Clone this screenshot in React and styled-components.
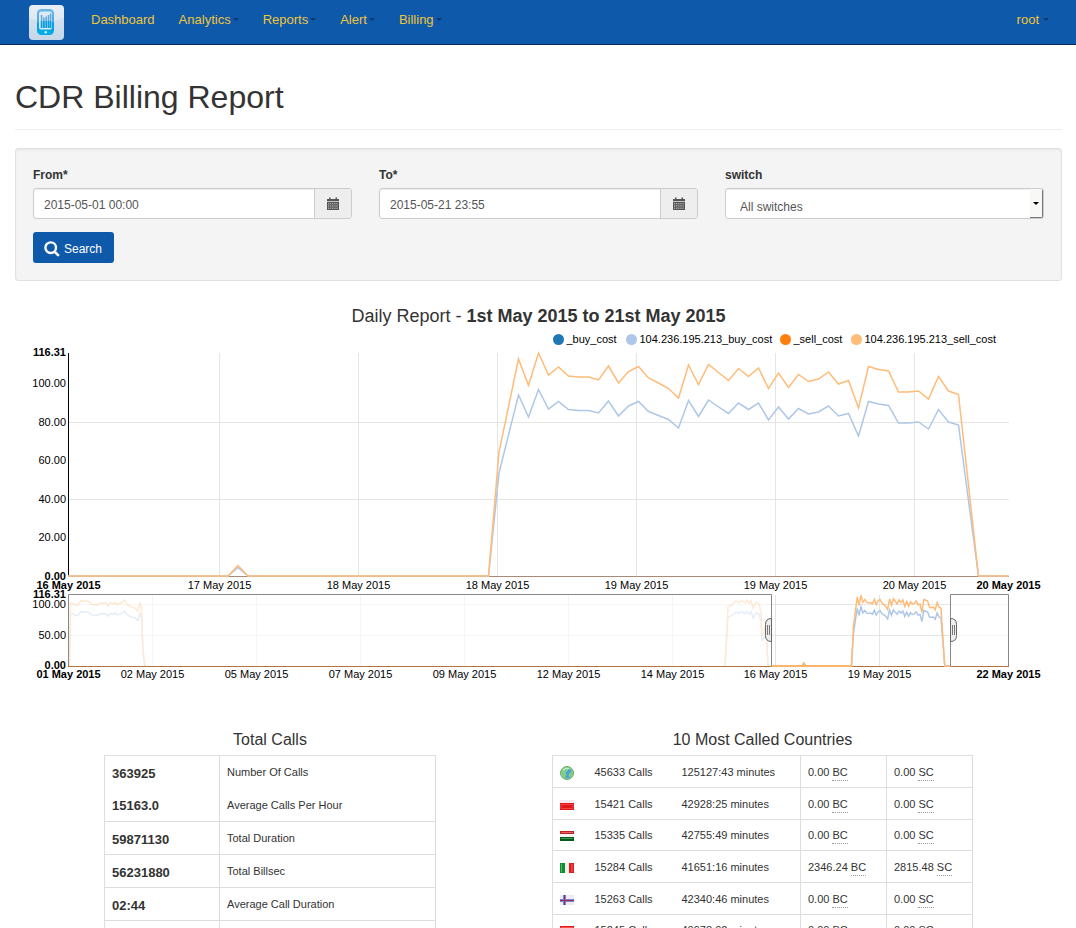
import React from "react";
import styled, { createGlobalStyle } from "styled-components";

const Global = createGlobalStyle`
  * { box-sizing: border-box; }
  body {
    margin: 0;
    background: #fff;
    color: #333;
    font-family: "Liberation Sans", Helvetica, Arial, sans-serif;
    font-size: 13px;
  }
`;

const Page = styled.div`
  height: 100vh;
  overflow: hidden;
`;

const Navbar = styled.nav`
  display: flex;
  align-items: center;
  height: 45px;
  padding: 0 27px 0 29px;
  background: #0e59aa;
  border-bottom: 1px solid #06294f;
`;

const Brand = styled.a`
  display: flex;
  margin-right: 27px;
`;

const NavList = styled.div`
  display: flex;
  flex: 1;
  gap: 24px;
  padding-bottom: 5px;
`;

const NavLink = styled.a`
  display: flex;
  align-items: center;
  gap: ${(p) => p.$gap || 2}px;
  color: #f0c537;
  font-size: 13px;
  line-height: 20px;
  text-decoration: none;
  margin-left: ${(p) => (p.$end ? "auto" : "0")};
`;

const Caret = styled.span`
  width: 6px;
  border: 3px solid transparent;
  border-top-color: #0a3a70;
  border-bottom: 0;
`;

const Main = styled.main`
  padding: 0 14px 0 15px;
`;

const Title = styled.h1`
  margin: 0 0 18px;
  padding: 32px 0 12px;
  border-bottom: 1px solid #eee;
  font-size: 32px;
  font-weight: 400;
  line-height: 40px;
`;

const SearchForm = styled.form`
  padding: 17px;
  background: #f4f4f4;
  border: 1px solid #e1e1e1;
  border-radius: 3px;
  box-shadow: inset 0 1px 2px rgba(0, 0, 0, 0.06);
`;

const Fields = styled.div`
  display: grid;
  grid-template-columns: repeat(3, 1fr);
  gap: 27px;
`;

const Field = styled.div`
  display: flex;
  flex-direction: column;
`;

const Label = styled.label`
  margin-bottom: 4px;
  font-size: 12px;
  font-weight: 700;
  line-height: 18px;
`;

const InputGroup = styled.div`
  display: flex;
  height: 31px;
  border: 1px solid #ccc;
  border-radius: 3px;
  background: #fff;
  box-shadow: inset 0 1px 1px rgba(0, 0, 0, 0.07);
  position: relative;
  overflow: hidden;
`;

const Input = styled.input`
  flex: 1;
  min-width: 0;
  padding: 2px 10px 0;
  border: 0;
  background: transparent;
  color: #555;
  font: 12px "Liberation Sans", Arial, sans-serif;
`;

const CalendarButton = styled.button`
  display: flex;
  align-items: center;
  justify-content: center;
  width: 37px;
  padding: 0 0 1px;
  border: 0;
  border-left: 1px solid #ccc;
  background: #eee;
`;

const Select = styled.select`
  flex: 1;
  appearance: none;
  padding: 6px 14px 0;
  border: 0;
  background: transparent;
  color: #555;
  font: 12px "Liberation Sans", Arial, sans-serif;
`;

const SelectArrow = styled.span`
  position: absolute;
  top: 0;
  right: 0;
  bottom: 0;
  display: flex;
  align-items: center;
  justify-content: center;
  width: 13px;
  border-right: 1px solid #777;
  border-bottom: 1px solid #777;
  background: #f8f8f6;
  pointer-events: none;

  &::after {
    content: "";
    border: 3px solid transparent;
    border-top-color: #000;
    border-bottom: 0;
  }
`;

const SearchButton = styled.button`
  display: flex;
  align-items: center;
  gap: 4px;
  height: 31px;
  margin-top: 13px;
  padding: 2px 12px 0 11px;
  border: 0;
  border-radius: 3px;
  background: #0e59aa;
  color: #fff;
  font: 12px "Liberation Sans", Arial, sans-serif;
`;

const ChartTitle = styled.h2`
  margin: 24px 0 3px;
  font-size: 18px;
  font-weight: 400;
  line-height: 22px;
  text-align: center;
`;

const ChartSvg = styled.svg`
  display: block;
  width: 100%;
  height: auto;

  text {
    font-family: "Liberation Sans", Arial, sans-serif;
    font-size: 11px;
    fill: #000;
  }
`;

const AxisText = styled.text`
  font-weight: ${(p) => (p.$bold ? 700 : 400)};
`;

const Reports = styled.section`
  display: grid;
  grid-template-columns: 1fr 1fr;
  gap: 27px;
  margin-top: 40px;
`;

const Report = styled.div`
  width: ${(p) => p.$width}px;
  max-width: 100%;
  justify-self: ${(p) => p.$align};
`;

const ReportTitle = styled.h3`
  margin: 0 0 5px;
  font-size: 16px;
  font-weight: 400;
  line-height: 20px;
  text-align: center;
`;

const Table = styled.table`
  width: 100%;
  border-collapse: collapse;
  border: 1px solid #ddd;
  table-layout: fixed;
  font-size: 11px;
`;

const TotalRow = styled.tr`
  height: 33px;
  border-top: ${(p) => (p.$joined ? "0" : "1px solid #ddd")};
`;

const TotalValue = styled.th`
  width: 115px;
  padding: 3px 7px 0;
  border-right: 1px solid #ddd;
  font-size: 13px;
  font-weight: 700;
  line-height: 16px;
  text-align: left;
`;

const Cell = styled.td`
  width: ${(p) => (p.$width ? p.$width + "px" : "auto")};
  padding: 0 7px;
  border-left: ${(p) => (p.$ruled ? "1px solid #ddd" : "0")};
  line-height: 16px;
  white-space: nowrap;
`;

const CountryRow = styled.tr`
  height: 32px;
  border-top: 1px solid #ddd;

  &:nth-child(3n) { height: 31px; }
`;

const FlagCell = styled(Cell)`
  padding-top: 2px;

  svg { display: block; }
`;

const Unit = styled.abbr`
  padding-bottom: 2px;
  border-bottom: 1px dotted #999;
  text-decoration: none;
`;

function Logo() {
  return (
    <svg width="35" height="35" viewBox="0 0 35 35" aria-label="Home">
      <defs>
        <linearGradient id="tile" x1="0" y1="0" x2="0" y2="1">
          <stop offset="0" stopColor="#dfe9f2" />
          <stop offset="1" stopColor="#c3d6e8" />
        </linearGradient>
        <linearGradient id="phone" x1="0" y1="0" x2="0" y2="1">
          <stop offset="0" stopColor="#6cb6e6" />
          <stop offset="0.5" stopColor="#4aa9e2" />
          <stop offset="0.55" stopColor="#0a9de0" />
          <stop offset="1" stopColor="#00aeea" />
        </linearGradient>
      </defs>
      <rect width="35" height="35" rx="4" fill="url(#tile)" />
      <path d="M0 13V4a4 4 0 0 1 4-4h27a4 4 0 0 1 4 4v9Q17 20 0 13Z" fill="#fff" opacity="0.25" />
      <rect x="8" y="4" width="17" height="26" rx="4.500" fill="url(#phone)" />
      <rect x="10" y="6.500" width="13" height="18" rx="2" fill="#dceaf5" />
      <path d="M12.600 16V10M14.900 16V12.500M17.200 16V11.500M19.500 16V10M21.600 16V8.500" stroke="#5aa8de" strokeWidth="1.500" />
      <path d="M12.600 23V16M14.900 23V16M17.200 23V16M19.500 23V16M21.600 23V16" stroke="#0a9de0" strokeWidth="1.800" />
      <circle cx="16.700" cy="27.200" r="1.200" fill="#e6f4fb" />
    </svg>
  );
}

function CalendarIcon() {
  return (
    <svg width="12" height="13" viewBox="0 0 12 13" fill="#555">
      <path d="M0 2h2V0.500h1.500V2h5V0.500H10V2h2v2.300H0Z" />
      <path d="M0 5h12v8H0Z" />
      <path d="M1 6.800h10M1 9h10M1 11.200h10" stroke="#e4e4e4" strokeWidth="0.900" strokeDasharray="1.200 0.900" />
    </svg>
  );
}

function SearchIcon() {
  return (
    <svg width="16" height="16" viewBox="0 0 16 16" fill="none" stroke="#fff">
      <circle cx="6.700" cy="6.700" r="5.300" strokeWidth="2.400" />
      <path d="m10.800 10.800 3.300 3.300" strokeWidth="2.600" strokeLinecap="round" />
    </svg>
  );
}

/* Traces in plot units: x in 68–1008, y in 353 (peak) – 576 (zero). */
const SELL = [
  [68, 576], [228, 576], [238, 565.5], [248, 576], [488.5, 576], [499, 452], [518.5, 359],
  [528.5, 385.5], [538.5, 353], [548.5, 375], [558.5, 367], [568.5, 376], [578.5, 377],
  [588.5, 377], [598.5, 380], [608.5, 366], [618.5, 383], [628.5, 371.5], [638.5, 366.5],
  [648.5, 378], [658.5, 383], [668.5, 388.5], [678.5, 398], [688.5, 365], [698.5, 384.5],
  [708.5, 364.5], [718.5, 372.5], [728.5, 380.5], [738.5, 368.5], [748.5, 376.5], [758.5, 368],
  [768.5, 388.5], [778.5, 373], [788.5, 387.5], [798.5, 374.5], [808.5, 381.5], [818.5, 379],
  [828.5, 372], [838.5, 384], [848.5, 380.5], [858.5, 408], [868.5, 366.5], [878.5, 369.5],
  [888.5, 371], [898.5, 392], [908.5, 392], [918.5, 391], [928.5, 399], [938.5, 376.5],
  [948.5, 391], [958.5, 394.5], [978.5, 576], [1008.5, 576],
];
const BUY = [
  [68, 576], [228, 576], [238, 567.5], [248, 576], [488.5, 576], [499, 473], [518.5, 395],
  [528.5, 417], [538.5, 389.5], [548.5, 409], [558.5, 401.5], [568.5, 409.5], [578.5, 410.5],
  [588.5, 410.5], [598.5, 413], [608.5, 401], [618.5, 416], [628.5, 406], [638.5, 401.5],
  [648.5, 411.5], [658.5, 415.5], [668.5, 419.5], [678.5, 428], [688.5, 400.5], [698.5, 416.5],
  [708.5, 400], [718.5, 407], [728.5, 413.5], [738.5, 403], [748.5, 409.5], [758.5, 403],
  [768.5, 420], [778.5, 407], [788.5, 419], [798.5, 408.5], [808.5, 414], [818.5, 412],
  [828.5, 406], [838.5, 416], [848.5, 413.5], [858.5, 436], [868.5, 401.5], [878.5, 404],
  [888.5, 405.5], [898.5, 423], [908.5, 423], [918.5, 422], [928.5, 429], [938.5, 409.5],
  [948.5, 422], [958.5, 425], [978.5, 576], [1008.5, 576],
];

/* Overview traces outside the selected range; y is the sell line. */
const EARLY = [
  [69.5, 666], [70.5, 603], [74, 604], [76, 605.5], [78, 605], [81, 600.5], [84, 601], [88, 601],
  [92, 604.5], [98, 605], [100, 603], [106, 603], [108, 606], [110, 602.5], [113, 604],
  [115, 602], [117, 604.5], [122, 602.5], [124.5, 600], [127, 604.5], [131, 607], [135, 608],
  [138, 611], [140, 603], [141.5, 607], [143, 650], [145, 666],
];
const MIDDLE = [
  [725, 666], [728, 607], [732, 605], [736, 601], [739, 602.5], [742, 600.5], [745, 603],
  [747, 600], [749, 603.5], [751, 600.5], [753, 608], [756, 602], [759, 604], [761, 612],
  [762, 635], [764, 633], [766, 621], [768, 666],
];

const toPoints = (pts) => pts.map((p) => p.join(",")).join(" ");
const toOverview = (pts) =>
  toPoints(pts.map(([x, y]) => [771.5 + (x - 68.5) * 0.1904, 666 - (576 - y) * 0.318]));
const toBuy = (pts) => toPoints(pts.map(([x, y]) => [x, y === 666 ? y : 666 - (666 - y) * 0.83]));

const LEGEND = [
  [558.5, "#1f77b4", "_buy_cost"],
  [631.5, "#aec7e8", "104.236.195.213_buy_cost"],
  [785.5, "#ff7f0e", "_sell_cost"],
  [856.5, "#ffbb78", "104.236.195.213_sell_cost"],
];
const MAIN_X = [
  [219.5, "17 May 2015"], [358.5, "18 May 2015"], [497.5, "18 May 2015"], [636.5, "19 May 2015"],
  [775.5, "19 May 2015"], [914.5, "20 May 2015"],
];
const MAIN_Y = [
  [356, "116.31", true], [387, "100.00"], [426, "80.00"], [464, "60.00"], [503, "40.00"],
  [541, "20.00"], [580, "0.00", true], [598, "116.31", true], [608, "100.00"], [639, "50.00"],
  [669, "0.00", true],
];
const MINI_X = [
  [152.5, "02 May 2015"], [256.5, "05 May 2015"], [360.5, "07 May 2015"], [464.5, "09 May 2015"],
  [568.5, "12 May 2015"], [672.5, "14 May 2015"], [775.5, "16 May 2015"], [879.5, "19 May 2015"],
];
const ENDS = [
  [68.5, 589, "16 May 2015"], [1008.5, 589, "20 May 2015"],
  [68.5, 678, "01 May 2015"], [1008.5, 678, "22 May 2015"],
];

function BrushHandle({ x, side }) {
  const d = side;
  return (
    <g>
      <path
        d={`M${x} 618.5q${d * 6} 0 ${d * 6} 6v11q0 6 ${-d * 6} 6Z`}
        fill="#eee"
        stroke="#666"
      />
      <path d={`M${x + d * 2} 625v10M${x + d * 4} 625v10`} stroke="#777" />
    </g>
  );
}

function Chart() {
  return (
    <ChartSvg viewBox="15 330 1047 360" role="img" aria-label="Daily report costs">
      {LEGEND.map(([x, color, name]) => (
        <g key={name}>
          <circle cx={x} cy="339.500" r="5.500" fill={color} />
          <text x={x + 8} y="343">{name}</text>
        </g>
      ))}
      <g stroke="#e5e5e5">
        {MAIN_X.map(([x]) => <path key={x} d={`M${x} 353V576`} />)}
        <path d="M69 422.500H1009M69 499.500H1009" />
      </g>
      <path d="M68.500 353V577" stroke="#000" />
      <path d="M68 576.500H1009" stroke="#a88a78" />
      <g fill="none" strokeWidth="1.500">
        <polyline points={toPoints(BUY)} stroke="#aec7e8" />
        <polyline points={toPoints(SELL)} stroke="#ffbb78" />
      </g>

      <g stroke="#e5e5e5">
        <path d="M69 604.500H1009M69 635.500H1009" opacity="0.350" />
        <path d="M772 604.500H950M772 635.500H950" />
        {MINI_X.map(([x]) => (
          <path key={x} d={`M${x} 595V666`} opacity={x > 772 ? 1 : 0.35} />
        ))}
      </g>
      <path d="M68 666.500H1009" stroke="#b5723a" />
      <g fill="none" strokeWidth="1.500">
        <g opacity="0.300">
          <polyline points={toBuy(EARLY)} stroke="#aec7e8" />
          <polyline points={toBuy(MIDDLE)} stroke="#aec7e8" />
          <polyline points={toPoints(EARLY)} stroke="#ffbb78" />
          <polyline points={toPoints(MIDDLE)} stroke="#ffbb78" />
        </g>
        <polyline points={toOverview(BUY)} stroke="#aec7e8" />
        <polyline points={toOverview(SELL)} stroke="#ffbb78" />
      </g>
      <path d="M772 666H852" stroke="#ffb46c" strokeWidth="2" />
      <g fill="none" stroke="#888">
        <path d="M68.500 666V594.500H771.500V666" />
        <path d="M950.500 666V594.500H1008.500V666" />
      </g>
      <BrushHandle x={771.5} side={-1} />
      <BrushHandle x={950.5} side={1} />

      <g textAnchor="end">
        {MAIN_Y.map(([y, label, bold]) => (
          <AxisText key={y} x="66" y={y} $bold={bold}>{label}</AxisText>
        ))}
      </g>
      <g textAnchor="middle">
        {MAIN_X.map(([x, label]) => <AxisText key={x} x={x} y="589">{label}</AxisText>)}
        {MINI_X.map(([x, label]) => <AxisText key={x} x={x} y="678">{label}</AxisText>)}
        {ENDS.map(([x, y, label]) => (
          <AxisText key={label} x={x} y={y} $bold>{label}</AxisText>
        ))}
      </g>
    </ChartSvg>
  );
}

function Flag({ name }) {
  if (name === "world") {
    return (
      <svg width="14" height="14" viewBox="0 0 14 14">
        <circle cx="7" cy="7" r="6.500" fill="#8fd093" stroke="#62ab62" />
        <circle cx="7.500" cy="7.500" r="4.800" fill="#4f9fd6" />
        <path d="M2 5Q4 1 9 2L8 4.500 5.500 6.500 6.500 9 5 12Q2 10 2 5ZM9.500 7l3-2v4l-2.500 3-1.500-2.500Z" fill="#7fd08a" />
        <path d="M3 4Q6 1.500 9 2.500" stroke="#d0f0d0" fill="none" />
      </svg>
    );
  }
  const art = {
    poland: (
      <>
        <path fill="#f5e9eb" d="M0 0h14v4H0Z" />
        <path fill="#e01818" d="M0 3h14v7H0Z" />
        <path d="M1 4.500h12v4H1Z" stroke="#f45050" strokeWidth="0.800" fill="none" />
      </>
    ),
    hungary: (
      <>
        <path fill="#c22020" d="M0 0h14v3H0Z" />
        <path d="M1 1.500h12" stroke="#e86060" />
        <path fill="#f4f4f4" d="M0 3h14v4H0Z" />
        <path fill="#0a5a1c" d="M0 6h14v4H0Z" />
        <path d="M1 7.500h12" stroke="#3c9a4c" />
      </>
    ),
    italy: (
      <>
        <path fill="#f0f0f0" d="M0 0h14v10H0Z" />
        <path fill="#128a30" d="M0 0h5v10H0Z" />
        <path fill="#e01c1c" d="M9 0h5v10H9Z" />
        <path d="M1.500 1v8" stroke="#4cb864" />
        <path d="M12 1v8" stroke="#f46060" />
      </>
    ),
    faroe: (
      <>
        <path fill="#ececf2" d="M0 0h14v10H0Z" />
        <path d="M4.500 0v10M0 5.500h14" stroke="#7a86d0" strokeWidth="3" />
        <path d="M4.500 0v10M0 5.500h14" stroke="#a02858" strokeWidth="1" />
      </>
    ),
    red: (
      <>
        <path fill="#e01818" d="M0 0h14v10H0Z" />
        <path d="M1 1.500h12v7H1Z" fill="none" stroke="#f66" strokeWidth="0.800" />
      </>
    ),
  };
  return <svg width="14" height="10" viewBox="0 0 14 10">{art[name]}</svg>;
}

const TOTALS = [
  ["363925", "Number Of Calls"],
  ["15163.0", "Average Calls Per Hour"],
  ["59871130", "Total Duration"],
  ["56231880", "Total Billsec"],
  ["02:44", "Average Call Duration"],
  ["", ""],
];
const COUNTRIES = [
  ["world", "45633", "125127:43", "0.00", "0.00"],
  ["poland", "15421", "42928:25", "0.00", "0.00"],
  ["hungary", "15335", "42755:49", "0.00", "0.00"],
  ["italy", "15284", "41651:16", "2346.24", "2815.48"],
  ["faroe", "15263", "42340:46", "0.00", "0.00"],
  ["red", "15245", "40978:02", "0.00", "0.00"],
];
const MENUS = ["Analytics", "Reports", "Alert", "Billing"];

export default function App() {
  return (
    <Page>
      <Global />
      <Navbar>
        <Brand href="#"><Logo /></Brand>
        <NavList>
          <NavLink href="#">Dashboard</NavLink>
          {MENUS.map((m) => <NavLink key={m} href="#">{m}<Caret /></NavLink>)}
          <NavLink href="#" $end $gap={4}>root<Caret /></NavLink>
        </NavList>
      </Navbar>
      <Main>
        <Title>CDR Billing Report</Title>
        <SearchForm onSubmit={(e) => e.preventDefault()}>
          <Fields>
            <Field>
              <Label htmlFor="from">From*</Label>
              <InputGroup>
                <Input id="from" defaultValue="2015-05-01 00:00" />
                <CalendarButton type="button" aria-label="Pick start date"><CalendarIcon /></CalendarButton>
              </InputGroup>
            </Field>
            <Field>
              <Label htmlFor="to">To*</Label>
              <InputGroup>
                <Input id="to" defaultValue="2015-05-21 23:55" />
                <CalendarButton type="button" aria-label="Pick end date"><CalendarIcon /></CalendarButton>
              </InputGroup>
            </Field>
            <Field>
              <Label htmlFor="switch">switch</Label>
              <InputGroup>
                <Select id="switch"><option>All switches</option></Select>
                <SelectArrow />
              </InputGroup>
            </Field>
          </Fields>
          <SearchButton type="submit"><SearchIcon />Search</SearchButton>
        </SearchForm>
        <ChartTitle>Daily Report - <b>1st May 2015 to 21st May 2015</b></ChartTitle>
        <Chart />
        <Reports>
          <Report $width={332} $align="center">
            <ReportTitle>Total Calls</ReportTitle>
            <Table>
              <tbody>
                {TOTALS.map(([value, label], i) => (
                  <TotalRow key={i} $joined={i === 1}>
                    <TotalValue scope="row">{value}</TotalValue>
                    <Cell>{label}</Cell>
                  </TotalRow>
                ))}
              </tbody>
            </Table>
          </Report>
          <Report $width={421} $align="start">
            <ReportTitle>10 Most Called Countries</ReportTitle>
            <Table>
              <tbody>
                {COUNTRIES.map(([flag, calls, minutes, buy, sell]) => (
                  <CountryRow key={flag}>
                    <FlagCell $width={35}><Flag name={flag} /></FlagCell>
                    <Cell $width={87}>{calls} Calls</Cell>
                    <Cell>{minutes} minutes</Cell>
                    <Cell $width={86} $ruled>{buy} <Unit title="Buy cost">BC</Unit></Cell>
                    <Cell $width={86} $ruled>{sell} <Unit title="Sell cost">SC</Unit></Cell>
                  </CountryRow>
                ))}
              </tbody>
            </Table>
          </Report>
        </Reports>
      </Main>
    </Page>
  );
}
